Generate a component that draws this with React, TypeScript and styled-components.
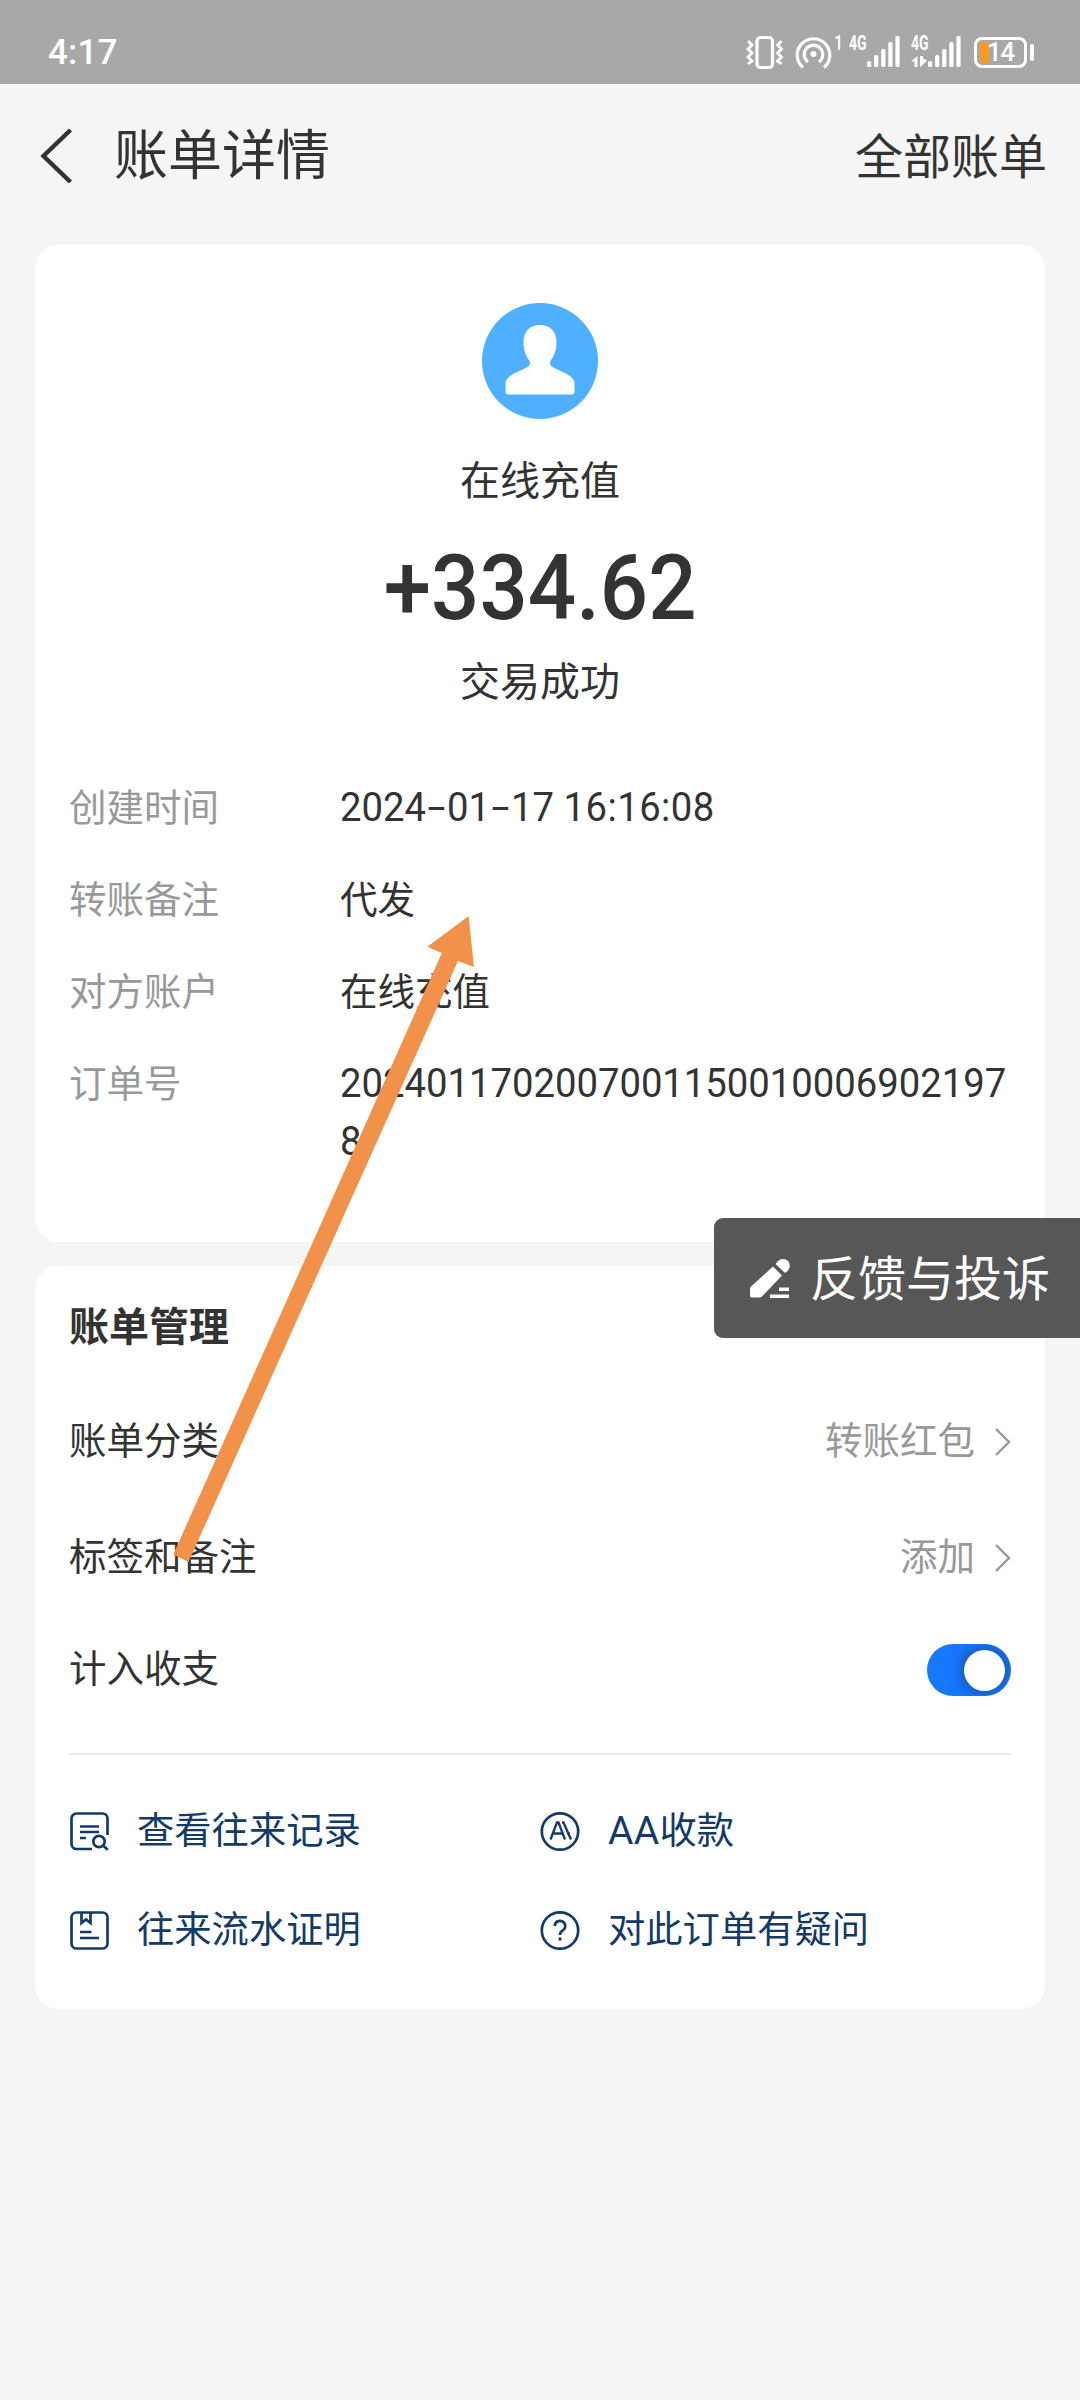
import React from 'react';
import styled, { createGlobalStyle } from 'styled-components';

const CJK = '"Noto Sans CJK SC", sans-serif';
const MIXED = 'Roboto, "Noto Sans CJK SC", sans-serif';
const INK = '#333333';
const LINK = '#143a68';

const Global = createGlobalStyle`
  * { box-sizing: border-box; }
  html, body { margin: 0; padding: 0; background: #f5f5f5; }
  svg { display: block; flex: none; }
`;

const Screen = styled.div`
  position: relative;
  width: 1080px;
  height: 2400px;
  overflow: hidden;
  background: #f5f5f5;
  color: ${INK};
  font-family: ${CJK};
`;

const StatusBar = styled.header`
  display: flex;
  align-items: flex-start;
  justify-content: space-between;
  height: 84px;
  padding: 0 46px 0 48px;
  background: #a8a8a8;
  color: #fff;
`;

const Clock = styled.div`
  padding-top: 32px;
  font: 500 35px/42px ${MIXED};
  letter-spacing: 0.2px;
`;

const StatusIcons = styled.div`
  display: flex;
  align-items: flex-start;
  padding-top: 35px;
`;

const VibrateIcon = styled.svg`margin-right: 11px;`;
const HotspotIcon = styled.svg`margin-right: 2px;`;

const TinyText = styled.span`
  font: 500 20px/16px ${MIXED};
  height: 16px;
`;

const HotspotCount = styled(TinyText)`
  width: 15px;
  transform: scaleX(0.8);
  transform-origin: left center;
`;

const NetText = styled(TinyText)`
  display: block;
  width: 19px;
  font-weight: 700;
  transform: scaleX(0.7);
  transform-origin: left center;
`;

const Signal = styled.div<{ $gap: number }>`
  display: flex;
  width: 51px;
  margin-right: ${(p) => p.$gap}px;
`;

const SignalSide = styled.div<{ $w: number }>`
  width: ${(p) => p.$w}px;
  flex: none;
`;

const Battery = styled.div`
  display: flex;
  align-items: center;
  margin-top: 2px;
`;

const BatteryBody = styled.div`
  display: flex;
  align-items: center;
  width: 53px;
  height: 31px;
  padding-left: 3px;
  border: 3px solid #fff;
  border-radius: 8px;
  font: 500 26px/25px ${MIXED};
  letter-spacing: -1.5px;
`;

const BatteryLevel = styled.span`
  width: 9px;
  height: 21px;
  margin-right: -2px;
  border-radius: 3px 0 0 3px;
  background: #ff9a1f;
`;

const BatteryCap = styled.span`
  width: 4px;
  height: 17px;
  margin-left: 3px;
  border-radius: 2px;
  background: #fff;
`;

const NavBar = styled.nav`
  display: flex;
  align-items: center;
  height: 161px;
  padding: 0 33px 19px 39px;
`;

const NavTitle = styled.h1`
  flex: 1;
  margin: -6px 0 0 39px;
  font-size: 54px;
  line-height: 72px;
  font-weight: 400;
`;

const NavAction = styled.a`
  margin-top: -5px;
  font-size: 48px;
  line-height: 72px;
`;

const Card = styled.section<{ $height: number }>`
  width: 1010px;
  height: ${(p) => p.$height}px;
  margin: 0 auto 24px 35px;
  padding: 0 34px;
  border-radius: 24px;
  background: #fff;
`;

const Summary = styled.div`
  display: flex;
  flex-direction: column;
  align-items: center;
  padding-top: 58px;
`;

const SummaryText = styled.div`
  font-size: 40px;
  line-height: 60px;
`;

const Payee = styled(SummaryText)`margin-top: 29px;`;

const Amount = styled.div`
  margin: 26px 0 7px;
  font: 500 91px/108px ${MIXED};
  transform: scaleX(0.935);
`;

const Details = styled.dl`
  display: grid;
  grid-template-columns: 271px 1fr;
  row-gap: 34px;
  margin: 67px 0 0;
  font-size: 37.5px;
  line-height: 58px;
`;

const DetailLabel = styled.dt`color: #999;`;

const DetailValue = styled.dd`
  margin: 0;
  white-space: nowrap;
`;

const Digits = styled.span`
  display: block;
  margin: 3px 0 -3px;
  font: 400 40px/58px ${MIXED};
  transform: scaleX(0.956);
  transform-origin: left center;
`;

const OrderNumber = styled(Digits)`
  width: 705px;
  white-space: normal;
  word-break: break-all;
`;

const Dash = styled.span`
  display: inline-block;
  width: 22px;
  text-align: center;
  transform: scaleX(1.7);
`;

const Time = styled.span`
  letter-spacing: 0.5px;
`;

const SectionTitle = styled.h2`
  margin: 0;
  padding-top: 28px;
  font-size: 40px;
  line-height: 60px;
  font-weight: 700;
`;

const SettingRow = styled.div<{ $top: number }>`
  display: flex;
  align-items: center;
  justify-content: space-between;
  height: 60px;
  margin-top: ${(p) => p.$top}px;
  font-size: 37.5px;
  line-height: 60px;
`;

const RowValue = styled.span`
  display: flex;
  align-items: center;
  gap: 20px;
  color: #999;
`;

const RowChevron = styled.svg`
  margin-top: 7px;
`;

const Toggle = styled.button`
  display: flex;
  align-items: center;
  justify-content: flex-end;
  width: 84px;
  height: 52px;
  margin: 8px 0 0;
  padding: 0 6px 0 0;
  border: 0;
  border-radius: 26px;
  background: #1677ff;
`;

const Knob = styled.span`
  width: 41px;
  height: 41px;
  border-radius: 50%;
  background: #fff;
  box-shadow: 0 0 12px 3px rgba(30, 50, 90, 0.5);
  clip-path: inset(-5px -6px -5px -14px round 0 26px 26px 0);
`;

const Divider = styled.hr`
  height: 2px;
  margin: 57px 0 0;
  border: 0;
  background: #ebebeb;
`;

const Links = styled.div`
  display: grid;
  grid-template-columns: 471px 1fr;
  row-gap: 39px;
  margin-top: 46px;
`;

const LinkItem = styled.a`
  display: flex;
  align-items: center;
  gap: 28px;
  height: 60px;
  color: ${LINK};
  font: 400 37.3px/60px ${CJK};
`;

const LinkText = styled.span`
  margin-top: -7px;
`;

const Latin = styled.span`
  font: 400 39px/40px ${MIXED};
  letter-spacing: 0.3px;
`;

const Feedback = styled.button`
  position: absolute;
  top: 1218px;
  right: 0;
  display: flex;
  align-items: center;
  gap: 20px;
  width: 366px;
  height: 120px;
  padding: 0 0 0 36px;
  border: 0;
  border-radius: 9px 0 0 9px;
  background: #575757;
  color: #fff;
  font: 400 48px/72px ${CJK};
  white-space: nowrap;
`;

const FeedbackText = styled.span`
  margin-top: -6px;
`;

const Pointer = styled.svg`
  position: absolute;
  left: 160px;
  top: 900px;
  pointer-events: none;
`;

const Bars = ({ sizes }: { sizes: number[] }) => (
  <svg width="33" height="32" viewBox="0 0 33 32" fill="#fff">
    {sizes.map((h, i) => (
      <rect key={i} x={i * 7.1} y={32 - h} width="4.2" height={h} rx="1.5" />
    ))}
  </svg>
);

const BAR_SIZES = [6, 12, 18, 25, 31];

const Chevron = () => (
  <RowChevron width="16" height="28" viewBox="0 0 16 28" fill="none" stroke="#999" strokeWidth="2.4">
    <path d="M1 1 14 14 1 27" />
  </RowChevron>
);

const iconProps = {
  width: 40,
  height: 40,
  viewBox: '0 0 40 40',
  fill: 'none',
  stroke: LINK,
  strokeWidth: 2.7,
};

const RecordsIcon = () => (
  <svg {...iconProps}>
    <path d="M23 38H7.500a5 5 0 0 1-5-5V7.500a5 5 0 0 1 5-5H33.500a5 5 0 0 1 5 5V24" />
    <path d="M11 15.500h19M11 21h19M11 27h6" />
    <circle cx="30" cy="30.500" r="5.700" />
    <path d="m34 34.500 4.800 4.300" />
  </svg>
);

const ProofIcon = () => (
  <svg {...iconProps}>
    <rect x="2.500" y="2.500" width="36" height="36" rx="5" />
    <path d="M12.500 2.500V13l4.500-3.500 4.500 3.500V2.500M11 22h11.500M11 28h19" />
  </svg>
);

const SplitIcon = () => (
  <svg {...iconProps}>
    <circle cx="20" cy="20.500" r="18.200" />
    <path d="m10.500 28.500 6.500-17h1.500l6.500 17M13 22.500h10M22 11.500h1.500L31 28.500M27 22.500h3" strokeWidth="2.3" />
  </svg>
);

const QuestionIcon = () => (
  <svg {...iconProps}>
    <circle cx="20" cy="20.500" r="18.200" />
    <path d="M14.800 16a5.200 5.200 0 1 1 8 4.400c-1.800 1.200-2.800 2.200-2.800 4.600" />
    <circle cx="20" cy="29" r="1.700" fill={LINK} stroke="none" />
  </svg>
);

const details: { label: string; value: React.ReactNode }[] = [
  {
    label: '创建时间',
    value: (
      <Digits>
        2024<Dash>-</Dash>01<Dash>-</Dash>17 <Time>16:16:08</Time>
      </Digits>
    ),
  },
  { label: '转账备注', value: '代发' },
  { label: '对方账户', value: '在线充值' },
  { label: '订单号', value: <OrderNumber>20240117020070011500100069021978</OrderNumber> },
];

const links: { id: string; text: React.ReactNode; Icon: () => React.ReactElement }[] = [
  { id: 'records', text: '查看往来记录', Icon: RecordsIcon },
  { id: 'split', text: <><Latin>AA</Latin>收款</>, Icon: SplitIcon },
  { id: 'proof', text: '往来流水证明', Icon: ProofIcon },
  { id: 'question', text: '对此订单有疑问', Icon: QuestionIcon },
];

export default function App() {
  return (
    <Screen>
      <Global />
      <StatusBar>
        <Clock>4:17</Clock>
        <StatusIcons>
          <VibrateIcon width="38" height="34" viewBox="0 0 38 34" fill="none" stroke="#fff">
            <rect x="11" y="2.500" width="15.500" height="30" rx="3.500" strokeWidth="3.200" />
            <path d="m2 6 4 4-4 4 4 4-4 4 4 4-4 3M35.500 6l-4 4 4 4-4 4 4 4-4 4 4 3" strokeWidth="2.800" />
          </VibrateIcon>
          <HotspotIcon width="37" height="34" viewBox="0 0 37 34" fill="none" stroke="#fff" strokeWidth="3.200">
            <path d="M8 32.500a16.300 16.300 0 1 1 21 0" />
            <path d="M13 27a9.300 9.300 0 1 1 11 0" />
            <circle cx="18.500" cy="19" r="3" fill="#fff" stroke="none" />
          </HotspotIcon>
          <HotspotCount>1</HotspotCount>
          <Signal $gap={11}>
            <SignalSide $w={18}>
              <NetText>4G</NetText>
            </SignalSide>
            <Bars sizes={BAR_SIZES} />
          </Signal>
          <Signal $gap={12}>
            <SignalSide $w={17}>
              <NetText>4G</NetText>
              <svg width="16" height="16" viewBox="0 0 16 16" fill="#fff">
                <path d="M6.500 5v11H3.500v-5.500H0zM9 5h3v2.500l4 2L9.500 16H9z" />
              </svg>
            </SignalSide>
            <Bars sizes={BAR_SIZES} />
          </Signal>
          <Battery>
            <BatteryBody>
              <BatteryLevel />
              14
            </BatteryBody>
            <BatteryCap />
          </Battery>
        </StatusIcons>
      </StatusBar>

      <NavBar>
        <svg width="36" height="56" viewBox="0 0 36 56" fill="none" stroke={INK} strokeWidth="4.4">
          <path d="M31.500 3 4.500 29l27 26" />
        </svg>
        <NavTitle>账单详情</NavTitle>
        <NavAction>全部账单</NavAction>
      </NavBar>

      <Card $height={997}>
        <Summary>
          <svg width="116" height="116" viewBox="0 0 116 116">
            <circle cx="58" cy="58" r="58" fill="#4eb0ff" />
            <path
              fill="#fff"
              d="M58 22c10 0 16.500 6.500 16.500 17 0 8-2.500 14-5.500 18-1.800 3-1 5.500 1.500 7 6 3.500 13 5.500 18 9.500 3 2.500 4 4.500 4 7.500v7.500c0 2-1 3-3 3h-63c-2 0-3-1-3-3V81c0-3 1-5 4-7.500 5-4 12-6 18-9.500 2.500-1.500 3.300-4 1.500-7-3-4-5.500-10-5.500-18 0-10.500 6.500-17 16.500-17z"
            />
          </svg>
          <Payee>在线充值</Payee>
          <Amount>+334.62</Amount>
          <SummaryText>交易成功</SummaryText>
        </Summary>
        <Details>
          {details.map((d) => (
            <React.Fragment key={d.label}>
              <DetailLabel>{d.label}</DetailLabel>
              <DetailValue>{d.value}</DetailValue>
            </React.Fragment>
          ))}
        </Details>
      </Card>

      <Card $height={743}>
        <SectionTitle>账单管理</SectionTitle>
        <SettingRow $top={54}>
          <span>账单分类</span>
          <RowValue>
            转账红包
            <Chevron />
          </RowValue>
        </SettingRow>
        <SettingRow $top={56}>
          <span>标签和备注</span>
          <RowValue>
            添加
            <Chevron />
          </RowValue>
        </SettingRow>
        <SettingRow $top={52}>
          <span>计入收支</span>
          <Toggle aria-pressed="true">
            <Knob />
          </Toggle>
        </SettingRow>
        <Divider />
        <Links>
          {links.map(({ id, text, Icon }) => (
            <LinkItem key={id}>
              <Icon />
              <LinkText>{text}</LinkText>
            </LinkItem>
          ))}
        </Links>
      </Card>

      <Feedback>
        <svg width="40" height="42" viewBox="0 0 40 42" fill="#fff">
          <path d="M23 9.500 32 18.500 12.500 39Q11 40.500 9 40.500H2Q0 40.500 0 38.500V32Q0 30.500 1.500 29z" />
          <path d="M25.500 7 28 4a7 7 0 0 1 10 0 7 7 0 0 1 0 9.500L35 16z" />
          <path d="M29 30.500h10v3.500H29zM20 37.500h19V41H20z" />
        </svg>
        <FeedbackText>反馈与投诉</FeedbackText>
      </Feedback>

      <Pointer width="330" height="680" viewBox="160 900 330 680" fill="#f29149">
        <path d="M468.700 916 473.900 967 458 961 188.500 1562 173.300 1554.500 441.900 953 427.400 946.700z" />
      </Pointer>
    </Screen>
  );
}
